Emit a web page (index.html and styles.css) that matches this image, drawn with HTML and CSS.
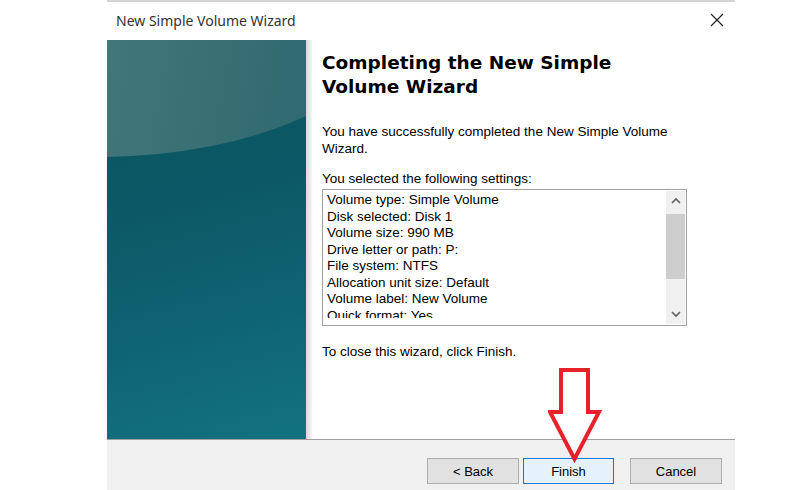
FILE: index.html
```html
<!DOCTYPE html>
<html lang="en">
<head>
    <meta charset="UTF-8">
    <title>New Simple Volume Wizard</title>
    <link rel="stylesheet" href="styles.css">
</head>
<body>
    <div class="dialog">
        <div class="titlebar">
            <span class="title">New Simple Volume Wizard</span>
            <svg class="close" width="14" height="14" viewBox="0 0 14 14">
                <path d="M1 1 L13 13 M13 1 L1 13" stroke="#222" stroke-width="1.2" fill="none"/>
            </svg>
        </div>
        <div class="main">
            <div class="banner"><div class="shine"></div></div>
            <div class="shadow"></div>
            <div class="content">
                <h1>Completing the New Simple Volume Wizard</h1>
                <p class="intro">You have successfully completed the New Simple Volume Wizard.</p>
                <p class="label">You selected the following settings:</p>
                <div class="listbox">
                    <div class="items">
                        <div>Volume type: Simple Volume</div>
                        <div>Disk selected: Disk 1</div>
                        <div>Volume size: 990 MB</div>
                        <div>Drive letter or path: P:</div>
                        <div>File system: NTFS</div>
                        <div>Allocation unit size: Default</div>
                        <div>Volume label: New Volume</div>
                        <div>Quick format: Yes</div>
                    </div>
                    <div class="scrollbar">
                        <svg class="arrow" width="10" height="8" viewBox="0 0 10 8"><path d="M1 6 L5 2 L9 6" stroke="#606060" stroke-width="1.6" fill="none"/></svg>
                        <div class="track"><div class="thumb"></div></div>
                        <svg class="arrow" width="10" height="8" viewBox="0 0 10 8"><path d="M1 2 L5 6 L9 2" stroke="#606060" stroke-width="1.6" fill="none"/></svg>
                    </div>
                </div>
                <p class="closing">To close this wizard, click Finish.</p>
            </div>
        </div>
        <div class="footer">
            <button class="btn">&lt; Back</button>
            <button class="btn default">Finish</button>
            <button class="btn cancel">Cancel</button>
        </div>
        <svg class="pointer" width="54" height="96" viewBox="0 0 54 96">
            <path d="M13 3 L40 3 L40 45 L51 45 L26.5 92 L2 45 L13 45 Z" stroke="#e8202a" stroke-width="4" fill="#fff" stroke-linejoin="miter"/>
        </svg>
    </div>
</body>
</html>
```

FILE: styles.css
```css
/* Pagina */
body {
    margin: 0;
    width: 800px;
    height: 490px;
    overflow: hidden;
    background-color: #fff;
    font-family: 'Liberation Sans', Arial, sans-serif;
}

/* Janela do assistente */
.dialog {
    position: relative;
    margin-left: 107px;
    width: 628px;
    border-top: 2px solid #d4d4d4;
}

.titlebar {
    height: 38px;
    display: flex;
    align-items: center;
    justify-content: space-between;
    padding: 0 11px 0 9px;
}

.title {
    font-family: 'Noto Sans', sans-serif;
    font-size: 14px;
    color: #333;
    margin-top: -2px;
}

.close {
    margin-top: -2px;
}

/* Area principal */
.main {
    display: flex;
    height: 399px;
}

.banner {
    position: relative;
    width: 199px;
    overflow: hidden;
    background: linear-gradient(165deg, #0a5560 0%, #0c5866 40%, #0f6474 70%, #127280 100%);
}

.shine {
    position: absolute;
    left: -310px;
    top: -173px;
    width: 600px;
    height: 290px;
    border-radius: 50%;
    background: linear-gradient(100deg, #447b7c 45%, #356d72 75%, #2a6370 100%);
}

.shadow {
    width: 6px;
    background: linear-gradient(90deg, #d8d8d8, #f6f6f6);
}

.content {
    flex: 1;
    padding: 11px 0 0 10px;
    font-size: 13.5px;
    color: #000;
}

h1 {
    font-family: 'DejaVu Sans', Verdana, sans-serif;
    font-weight: bold;
    font-size: 18.5px;
    line-height: 24px;
    width: 300px;
    margin: 0 0 24px 0;
    color: #000;
}

p {
    margin: 0;
    line-height: 17px;
}

.intro {
    width: 360px;
    margin-bottom: 13px;
}

.label {
    margin-bottom: 2px;
}

/* Lista de configuracoes */
.listbox {
    display: flex;
    width: 363px;
    height: 135px;
    border: 1px solid #a0a0a0;
    overflow: hidden;
}

.items {
    flex: 1;
    padding: 2px 0 0 4px;
    margin-bottom: 7px;
    line-height: 16.5px;
    overflow: hidden;
}

.scrollbar {
    width: 19px;
    margin: 1px 1px 1px 0;
    background-color: #f0f0f0;
    display: flex;
    flex-direction: column;
    align-items: center;
}

.arrow {
    margin: 6px 0;
}

.track {
    flex: 1;
    width: 100%;
}

.thumb {
    height: 65px;
    margin-top: 3px;
    background-color: #cdcdcd;
}

.closing {
    margin-top: 17px;
}

/* Rodape com botoes */
.footer {
    height: 50px;
    border-top: 1px solid #a0a0a0;
    background-color: #f0f0f0;
    display: flex;
    align-items: flex-start;
    padding: 18px 0 0 320px;
}

.btn {
    width: 92px;
    height: 26px;
    font-family: 'Liberation Sans', Arial, sans-serif;
    font-size: 13px;
    color: #000;
    background-color: #e1e1e1;
    border: 1px solid #adadad;
    padding: 0;
    margin-right: 4px;
}

.btn.default {
    background-color: #e5f1fb;
    border: 1px solid #0078d7;
    width: 91px;
}

.btn.cancel {
    margin-left: 12px;
}

/* Seta vermelha */
.pointer {
    position: absolute;
    left: 441px;
    top: 365px;
}
```
